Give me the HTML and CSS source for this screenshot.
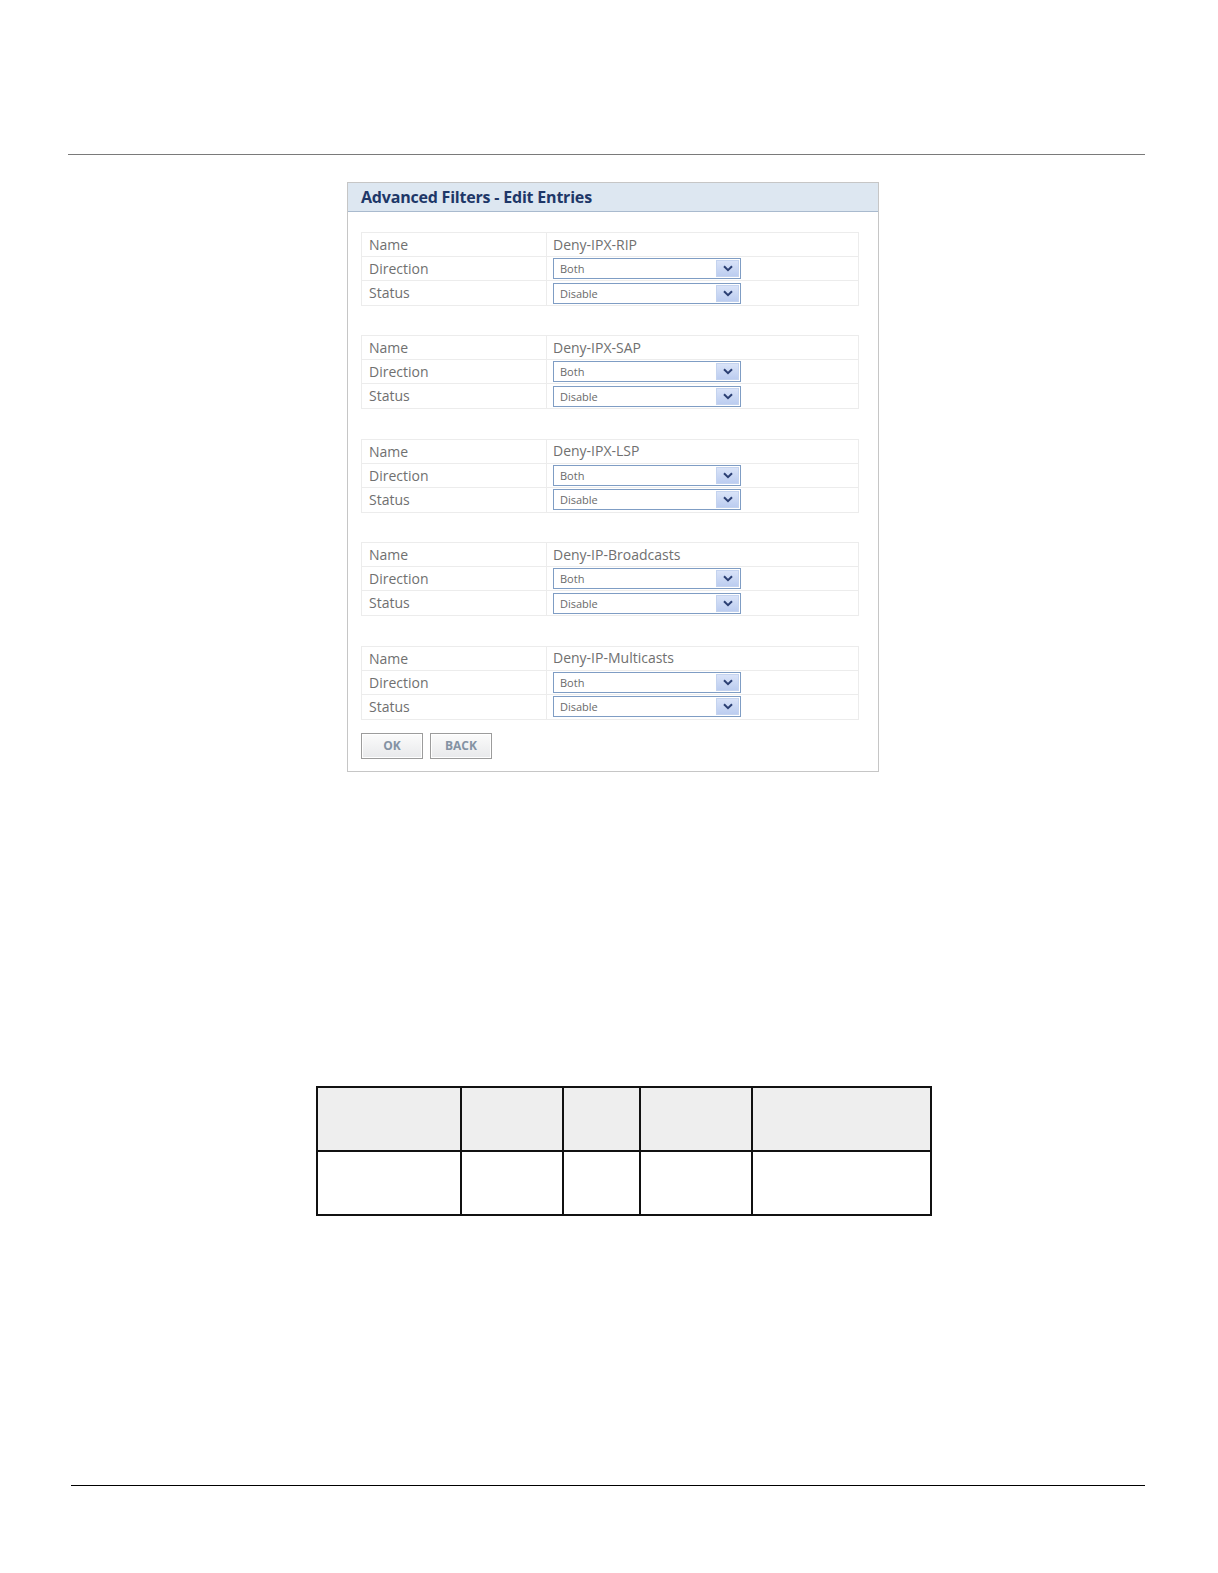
FILE: index.html
```html
<!DOCTYPE html>
<html>
<head>
<meta charset="utf-8">
<link rel="stylesheet" href="styles.css">
</head>
<body>
<div class="page">
  <div class="rule-top"></div>

  <div class="panel">
    <div class="panel-head">Advanced Filters - Edit Entries</div>
    <div class="panel-body">
      <div class="entry">
        <div class="row"><div class="lbl">Name</div><div class="val">Deny-IPX-RIP</div></div>
        <div class="row"><div class="lbl">Direction</div><div class="val"><div class="sel"><span>Both</span><span class="btn"><svg viewBox="0 0 10 7" width="10" height="7"><path d="M1 1.2 L5 5.2 L9 1.2" fill="none" stroke="#2b3f73" stroke-width="2"/></svg></span></div></div></div>
        <div class="row"><div class="lbl">Status</div><div class="val"><div class="sel"><span>Disable</span><span class="btn"><svg viewBox="0 0 10 7" width="10" height="7"><path d="M1 1.2 L5 5.2 L9 1.2" fill="none" stroke="#2b3f73" stroke-width="2"/></svg></span></div></div></div>
      </div>
      <div class="entry">
        <div class="row"><div class="lbl">Name</div><div class="val">Deny-IPX-SAP</div></div>
        <div class="row"><div class="lbl">Direction</div><div class="val"><div class="sel"><span>Both</span><span class="btn"><svg viewBox="0 0 10 7" width="10" height="7"><path d="M1 1.2 L5 5.2 L9 1.2" fill="none" stroke="#2b3f73" stroke-width="2"/></svg></span></div></div></div>
        <div class="row"><div class="lbl">Status</div><div class="val"><div class="sel"><span>Disable</span><span class="btn"><svg viewBox="0 0 10 7" width="10" height="7"><path d="M1 1.2 L5 5.2 L9 1.2" fill="none" stroke="#2b3f73" stroke-width="2"/></svg></span></div></div></div>
      </div>
      <div class="entry">
        <div class="row"><div class="lbl">Name</div><div class="val">Deny-IPX-LSP</div></div>
        <div class="row"><div class="lbl">Direction</div><div class="val"><div class="sel"><span>Both</span><span class="btn"><svg viewBox="0 0 10 7" width="10" height="7"><path d="M1 1.2 L5 5.2 L9 1.2" fill="none" stroke="#2b3f73" stroke-width="2"/></svg></span></div></div></div>
        <div class="row"><div class="lbl">Status</div><div class="val"><div class="sel"><span>Disable</span><span class="btn"><svg viewBox="0 0 10 7" width="10" height="7"><path d="M1 1.2 L5 5.2 L9 1.2" fill="none" stroke="#2b3f73" stroke-width="2"/></svg></span></div></div></div>
      </div>
      <div class="entry">
        <div class="row"><div class="lbl">Name</div><div class="val">Deny-IP-Broadcasts</div></div>
        <div class="row"><div class="lbl">Direction</div><div class="val"><div class="sel"><span>Both</span><span class="btn"><svg viewBox="0 0 10 7" width="10" height="7"><path d="M1 1.2 L5 5.2 L9 1.2" fill="none" stroke="#2b3f73" stroke-width="2"/></svg></span></div></div></div>
        <div class="row"><div class="lbl">Status</div><div class="val"><div class="sel"><span>Disable</span><span class="btn"><svg viewBox="0 0 10 7" width="10" height="7"><path d="M1 1.2 L5 5.2 L9 1.2" fill="none" stroke="#2b3f73" stroke-width="2"/></svg></span></div></div></div>
      </div>
      <div class="entry">
        <div class="row"><div class="lbl">Name</div><div class="val">Deny-IP-Multicasts</div></div>
        <div class="row"><div class="lbl">Direction</div><div class="val"><div class="sel"><span>Both</span><span class="btn"><svg viewBox="0 0 10 7" width="10" height="7"><path d="M1 1.2 L5 5.2 L9 1.2" fill="none" stroke="#2b3f73" stroke-width="2"/></svg></span></div></div></div>
        <div class="row"><div class="lbl">Status</div><div class="val"><div class="sel"><span>Disable</span><span class="btn"><svg viewBox="0 0 10 7" width="10" height="7"><path d="M1 1.2 L5 5.2 L9 1.2" fill="none" stroke="#2b3f73" stroke-width="2"/></svg></span></div></div></div>
      </div>
      <div class="actions">
        <button class="pbtn">OK</button>
        <button class="pbtn">BACK</button>
      </div>
    </div>
  </div>

  <table class="grid">
    <tr class="head"><td class="c1"></td><td class="c2"></td><td class="c3"></td><td class="c4"></td><td class="c5"></td></tr>
    <tr class="body"><td></td><td></td><td></td><td></td><td></td></tr>
  </table>

  <div class="rule-bottom"></div>
</div>
</body>
</html>
```

FILE: styles.css
```css
html, body {
  margin: 0;
  padding: 0;
  background: #ffffff;
}
.page {
  width: 1218px;
  height: 1573px;
  padding-top: 154px;
  box-sizing: border-box;
  font-family: "Open Sans", "DejaVu Sans", sans-serif;
}
.rule-top {
  margin-left: 68px;
  width: 1077px;
  height: 1px;
  background: #7a7a7a;
}
.panel {
  margin-top: 27px;
  margin-left: 347px;
  width: 532px;
  box-sizing: border-box;
  border: 1px solid #c6c6c6;
  background: #fff;
}
.panel-head {
  height: 28px;
  background: #dde7f1;
  border-bottom: 1px solid #a9bace;
  color: #1e3768;
  font-weight: 700;
  font-size: 16px;
  line-height: 28px;
  padding-left: 13px;
  letter-spacing: -0.2px;
}
.panel-body {
  padding: 20px 19px 12px 13px;
}
.entry {
  border: 1px solid #ececec;
  height: 74px;
  box-sizing: border-box;
  margin-bottom: 29.4px;
}
.entry:nth-child(5) {
  margin-bottom: 13.4px;
}
.row {
  display: flex;
  height: 24px;
  border-bottom: 1px solid #ececec;
  box-sizing: border-box;
}
.row:last-child {
  border-bottom: none;
}
.lbl {
  width: 185px;
  border-right: 1px solid #ececec;
  padding-left: 7px;
  font-size: 14px;
  color: #707070;
  line-height: 24px;
  box-sizing: border-box;
}
.val {
  flex: 1;
  padding-left: 6px;
  font-size: 14px;
  color: #707070;
  line-height: 24px;
  display: flex;
  align-items: center;
}
.sel {
  width: 188px;
  height: 21px;
  box-sizing: border-box;
  border: 1px solid #7f9dc4;
  background: #fff;
  display: flex;
  align-items: center;
  justify-content: space-between;
  padding: 1px 1px 1px 6px;
  font-size: 11px;
  color: #6a6a6a;
  line-height: 17px;
}
.btn {
  width: 23px;
  height: 17px;
  background: linear-gradient(#d9e3f8, #bccdf0);
  border: 1px solid #c4d3ef;
  box-sizing: border-box;
  display: flex;
  align-items: center;
  justify-content: center;
}
.actions {
  display: flex;
  gap: 7px;
}
.pbtn {
  width: 62px;
  height: 26px;
  box-sizing: border-box;
  border: 1px solid #9c9c9c;
  box-shadow: inset 0 0 0 1px #ffffff;
  background: linear-gradient(#fbfbfb, #e8e9eb);
  color: #8492a3;
  font-family: "Open Sans", "DejaVu Sans", sans-serif;
  font-weight: 700;
  font-size: 12px;
  padding: 0;
}
.grid {
  margin-top: 314px;
  margin-left: 316px;
  width: 614px;
  border-collapse: collapse;
  table-layout: fixed;
}
.grid td {
  border: 2px solid #111;
  padding: 0;
}
.grid .head td {
  height: 62px;
  background: #eeeeee;
}
.grid .body td {
  height: 62px;
  background: #fff;
}
.c1 { width: 142px; }
.c2 { width: 100px; }
.c3 { width: 75px; }
.c4 { width: 110px; }
.c5 { width: 177px; }
.rule-bottom {
  margin-top: 269px;
  margin-left: 71px;
  width: 1074px;
  height: 1px;
  background: #000;
}
```
